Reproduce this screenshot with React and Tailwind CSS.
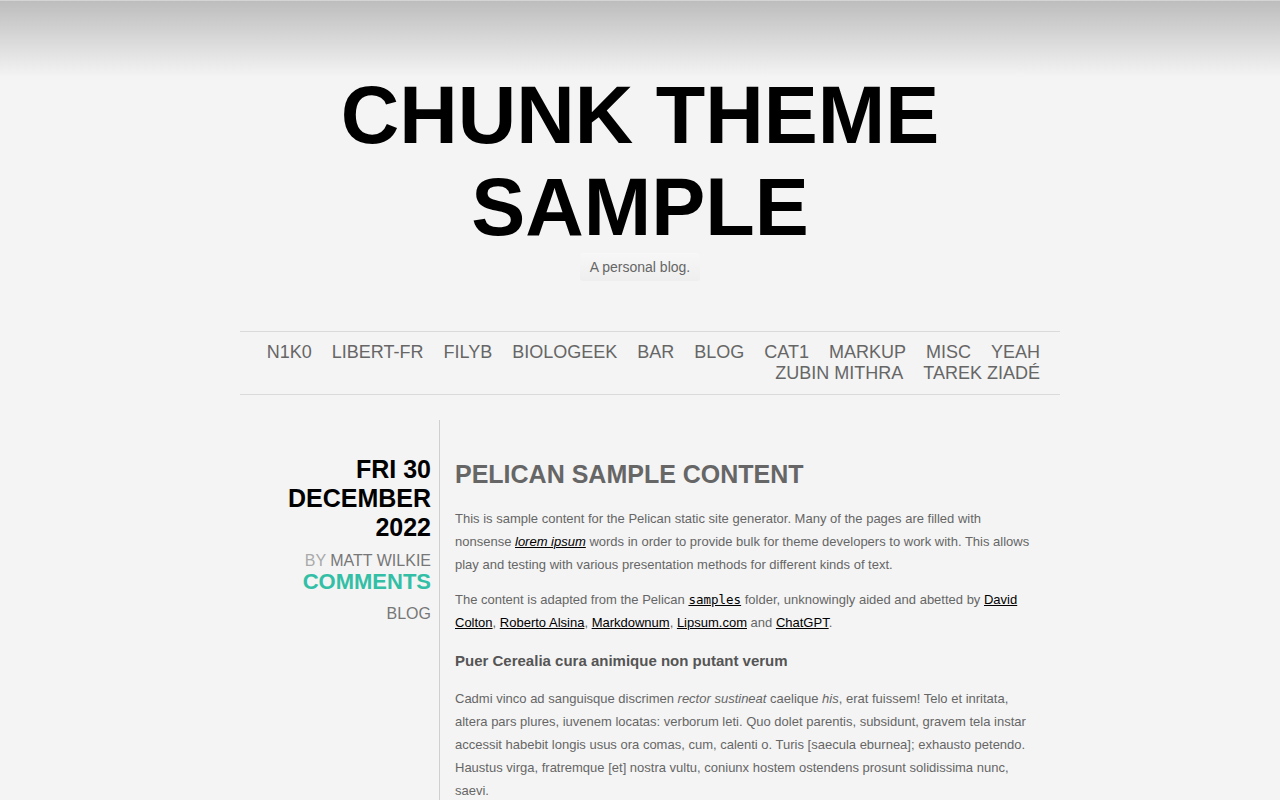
import React from 'react';

const navItems = [
  'N1K0', 'LIBERT-FR', 'FILYB', 'BIOLOGEEK', 'BAR', 'BLOG', 'CAT1',
  'MARKUP', 'MISC', 'YEAH', 'ZUBIN MITHRA', 'TAREK ZIADÉ',
];

function A({ children, italic }) {
  return (
    <a href="#" className={`text-black underline ${italic ? 'italic' : ''}`}>
      {children}
    </a>
  );
}

export default function App() {
  return (
    <div className="h-screen overflow-hidden bg-[#f4f4f4] font-['Liberation_Sans',Arial,sans-serif]">
      {/* header band */}
      <header className="border-t border-[#d4d4d4] bg-gradient-to-b from-[#bdbdbd] to-[#f4f4f4] bg-[length:100%_76px] bg-no-repeat">
        <div className="mx-auto w-[800px] pt-[68px] text-center">
          <h1 className="text-[81px] leading-[92px] font-bold text-black">
            CHUNK THEME SAMPLE
          </h1>
          <p className="mt-0 inline-block rounded-[3px] bg-gradient-to-b from-[#f7f7f7] to-[#eeeeee] px-[10px] py-[5px] text-[14px] leading-[18px] text-[#666]">
            A personal blog.
          </p>
        </div>
      </header>

      <div className="mx-auto w-[800px]">
        {/* categories */}
        <nav className="mt-[50px] mr-[-20px] border-y border-[#dadada] px-[20px] py-[10px]">
          <ul className="flex flex-wrap justify-end gap-x-[20px] text-[18px] leading-[21px] text-[#666]">
            {navItems.map((item) => (
              <li key={item}>
                <a href="#">{item}</a>
              </li>
            ))}
          </ul>
        </nav>

        {/* article */}
        <div className="mt-[25px] flex">
          <aside className="w-[200px] shrink-0 border-r border-[#cfcfcf] pt-[35px] pr-[8px] text-right">
            <div className="text-[25px] leading-[29px] font-bold text-black">
              FRI 30 DECEMBER 2022
            </div>
            <div className="mt-[10px] text-[16px] leading-[18px] text-[#777]">
              <span className="text-[#aaa]">BY </span>MATT WILKIE
            </div>
            <div className="text-[22px] leading-[24px] font-bold text-[#33bfa6]">COMMENTS</div>
            <div className="mt-[11px] text-[16px] leading-[18px] text-[#777]">BLOG</div>
          </aside>

          <main className="flex-1 pt-[39px] pl-[15px] pr-[8px] pb-[40px] text-[13px] leading-[23px] text-[#666]">
            <h2 className="text-[25px] leading-[30px] font-bold text-[#666]">
              PELICAN SAMPLE CONTENT
            </h2>
            <p className="mt-[18px]">
              This is sample content for the Pelican static site generator. Many of the pages are filled with
              nonsense <A italic>lorem ipsum</A> words in order to provide bulk for theme developers to work with. This
              allows play and testing with various presentation methods for different kinds of text.
            </p>
            <p className="mt-[12px]">
              The content is adapted from the Pelican{' '}
              <code className="font-['DejaVu_Sans_Mono',monospace] text-[12.5px] text-black underline">samples</code>{' '}
              folder, unknowingly aided and abetted by <A>David Colton</A>, <A>Roberto Alsina</A>,{' '}
              <A>Markdownum</A>, <A>Lipsum.com</A> and <A>ChatGPT</A>.
            </p>
            <h3 className="mt-[16px] text-[15px] leading-[22px] font-bold text-[#555]">
              Puer Cerealia cura animique non putant verum
            </h3>
            <p className="mt-[15px]">
              Cadmi vinco ad sanguisque discrimen <em>rector sustineat</em> caelique <em>his</em>, erat fuissem! Telo et
              inritata, altera pars plures, iuvenem locatas: verborum leti. Quo dolet parentis, subsidunt, gravem tela
              instar accessit habebit longis usus ora comas, cum, calenti o. Turis [saecula eburnea]; exhausto
              petendo. Haustus virga, fratremque [et] nostra vultu, coniunx hostem ostendens prosunt solidissima
              nunc, saevi.
            </p>
          </main>
        </div>
      </div>
    </div>
  );
}
